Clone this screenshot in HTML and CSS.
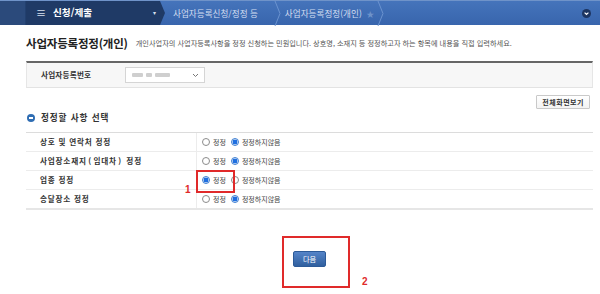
FILE: index.html
```html
<!DOCTYPE html>
<html lang="ko">
<head>
<meta charset="utf-8">
<title>사업자등록정정(개인)</title>
<link rel="stylesheet" href="styles.css">
</head>
<body>
<header class="gnb">
  <div class="gnb-home"></div>
  <div class="gnb-menu">
    <span class="burger">≡</span>
    <span class="menu-title">신청/제출</span>
    <span class="caret">▾</span>
  </div>
  <div class="crumb crumb-first">사업자등록신청/정정 등</div>
  <svg class="sep" width="8" height="25" viewBox="0 0 8 25"><polyline points="1,0 6,12.5 1,25" fill="none" stroke="#6b93cf" stroke-width="1"/></svg>
  <div class="crumb">사업자등록정정(개인) <span class="star">★</span></div>
  <svg class="sep" width="8" height="25" viewBox="0 0 8 25"><polyline points="1,0 6,12.5 1,25" fill="none" stroke="#6b93cf" stroke-width="1"/></svg>
  <div class="spacer"></div>
  <span class="gnb-toggle"><svg width="9" height="9" viewBox="0 0 9 9"><circle cx="4.5" cy="4.5" r="4.5" fill="#1d3561"/><polyline points="2.6,3.6 4.5,5.4 6.4,3.6" fill="none" stroke="#fff" stroke-width="1.2"/></svg></span>
</header>

<main class="content">
  <div class="title-row">
    <h1 class="page-title">사업자등록정정(개인)</h1>
    <p class="page-desc">개인사업자의 사업자등록사항을 정정 신청하는 민원입니다. 상호명, 소재지 등 정정하고자 하는 항목에 내용을 직접 입력하세요.</p>
  </div>

  <div class="reg-box">
    <span class="reg-label">사업자등록번호</span>
    <div class="select">
      <span class="blur-value"><i class="b1"></i><i class="b2"></i><i class="b3"></i></span>
      <svg class="select-arrow" width="7" height="5" viewBox="0 0 7 5"><polyline points="1,1 3.5,3.5 6,1" fill="none" stroke="#777" stroke-width="1"/></svg>
    </div>
  </div>

  <div class="tool-row">
    <button class="btn-plain" type="button">전체화면보기</button>
  </div>

  <h2 class="section-title"><span class="dot-icon"></span>정정할 사항 선택</h2>

  <div class="opt-table">
    <div class="opt-row">
      <div class="opt-label">상호 및 연락처 정정</div>
      <div class="opt-cell">
        <span class="radio"></span><span class="opt-text">정정</span>
        <span class="radio on"></span><span class="opt-text">정정하지않음</span>
      </div>
    </div>
    <div class="opt-row">
      <div class="opt-label">사업장소재지<span class="paren">(</span>임대차<span class="paren">)</span> 정정</div>
      <div class="opt-cell">
        <span class="radio"></span><span class="opt-text">정정</span>
        <span class="radio on"></span><span class="opt-text">정정하지않음</span>
      </div>
    </div>
    <div class="opt-row">
      <div class="opt-label">업종 정정</div>
      <div class="opt-cell marked">
        <span class="radio on"></span><span class="opt-text">정정</span>
        <span class="radio"></span><span class="opt-text">정정하지않음</span>
        <span class="mark mark-1">1</span>
      </div>
    </div>
    <div class="opt-row">
      <div class="opt-label">송달장소 정정</div>
      <div class="opt-cell">
        <span class="radio"></span><span class="opt-text">정정</span>
        <span class="radio on"></span><span class="opt-text">정정하지않음</span>
      </div>
    </div>
  </div>

  <div class="next-row">
    <div class="next-wrap">
      <button class="btn-next" type="button">다음</button>
      <span class="mark mark-2">2</span>
    </div>
  </div>
</main>
</body>
</html>
```

FILE: styles.css
```css
* { box-sizing: border-box; }

html, body {
  margin: 0;
  padding: 0;
  background: #fff;
}

body {
  width: 600px;
  height: 294px;
  overflow: hidden;
  font-family: "Noto Sans CJK KR", "Noto Sans", "Liberation Sans", sans-serif;
  color: #333;
}

/* ---------- top navigation bar ---------- */
.gnb {
  display: flex;
  align-items: center;
  height: 25px;
  background: linear-gradient(#4574bb, #3865ad);
  border-top: 1px solid #6f93c9;
}

.gnb-home {
  width: 26px;
  height: 100%;
  background: #2b4a7b;
  border-right: 1px solid #22406f;
}

.gnb-menu {
  display: flex;
  align-items: center;
  width: 139px;
  height: 100%;
  padding-left: 10px;
  background: #1f3a66;
  clip-path: polygon(0 0, calc(100% - 5px) 0, 100% 50%, calc(100% - 5px) 100%, 0 100%);
  color: #fff;
}

.burger {
  font-size: 10px;
  line-height: 1;
  color: #d8e0ee;
}

.menu-title {
  margin-left: 7px;
  font-size: 9.6px;
  font-weight: 700;
  line-height: 1;
  color: #fff;
}

.caret {
  margin-left: auto;
  margin-right: 9px;
  font-size: 6px;
  line-height: 1;
  color: #d8e0ee;
}

.crumb {
  font-size: 8.6px;
  line-height: 1;
  color: #d3def1;
  white-space: nowrap;
}

.crumb-first {
  margin-left: 8px;
  margin-right: 13px;
}

.sep {
  display: block;
  flex: none;
  margin-right: 3px;
}

.star {
  margin-left: 2px;
  font-size: 8px;
  color: #6e93ca;
}

.crumb + .sep { margin-left: 3px; }

.spacer { flex: 1; }

.gnb-toggle {
  display: flex;
  margin-right: 9px;
}

/* ---------- content ---------- */
.content {
  padding: 0 7px 0 26px;
}

.title-row {
  display: flex;
  align-items: center;
  height: 15px;
  margin-top: 11px;
}

.page-title {
  margin: 0;
  font-size: 11.5px;
  font-weight: 700;
  line-height: 15px;
  color: #222;
  letter-spacing: -0.2px;
  white-space: nowrap;
}

.page-desc {
  margin: 0 0 0 8px;
  font-size: 7.2px;
  line-height: 15px;
  color: #555;
  white-space: nowrap;
}

.reg-box {
  display: flex;
  align-items: center;
  height: 27px;
  margin-top: 10px;
  padding-left: 14px;
  background: #f7f7f7;
  border-top: 2px solid #666;
  border-left: 1px solid #e6e6e6;
  border-right: 1px solid #e6e6e6;
  border-bottom: 1px solid #e3e3e3;
}

.reg-label {
  width: 84px;
  font-size: 7.6px;
  font-weight: 700;
  letter-spacing: 0.2px;
  color: #333;
  line-height: 1;
}

.select {
  display: flex;
  align-items: center;
  width: 80px;
  height: 16px;
  padding: 0 5px 0 6px;
  background: #fff;
  border: 1px solid #d5d5d5;
}

.blur-value {
  display: flex;
  gap: 3px;
}

.blur-value i {
  display: block;
  height: 4px;
  background: #cfcfcf;
  border-radius: 1px;
  filter: blur(0.6px);
}

.blur-value .b1 { width: 11px; }
.blur-value .b2 { width: 6px; }
.blur-value .b3 { width: 15px; }

.select-arrow {
  margin-left: auto;
}

.tool-row {
  display: flex;
  justify-content: flex-end;
  margin-top: 7px;
  padding-right: 3px;
}

.btn-plain {
  height: 14px;
  padding: 0 5px;
  font-family: inherit;
  font-size: 7px;
  font-weight: 700;
  line-height: 12px;
  letter-spacing: 0.5px;
  color: #333;
  background: linear-gradient(#fff, #f3f3f3);
  border: 1px solid #c9c9c9;
  border-radius: 1px;
}

.section-title {
  display: flex;
  align-items: center;
  margin: 3px 0 0 1px;
  height: 11px;
  font-size: 8.6px;
  font-weight: 700;
  line-height: 11px;
  letter-spacing: 0.9px;
  color: #333;
}

.dot-icon {
  position: relative;
  width: 8px;
  height: 8px;
  margin-right: 6px;
  border-radius: 50%;
  background: #2f6db3;
}

.dot-icon::after {
  content: "";
  position: absolute;
  left: 2px;
  top: 3px;
  width: 4px;
  height: 2px;
  background: #fff;
}

/* ---------- option table ---------- */
.opt-table {
  margin-top: 9px;
  border-top: 1px solid #dcdcdc;
  border-bottom: 2px solid #e6e6e6;
}

.opt-row {
  display: flex;
  height: 19px;
  border-bottom: 1px solid #ececec;
}

.opt-row:last-child { border-bottom: 0; height: 18px; }

.opt-label {
  display: flex;
  align-items: center;
  width: 171px;
  padding-left: 14px;
  border-right: 1px solid #ececec;
  font-size: 7.6px;
  font-weight: 700;
  letter-spacing: 0.8px;
  line-height: 1;
  color: #333;
  white-space: pre;
}

.paren {
  padding: 0 1.5px;
}

.opt-cell {
  position: relative;
  display: flex;
  align-items: center;
  padding-left: 5px;
}

.radio {
  width: 8px;
  height: 8px;
  border-radius: 50%;
  border: 1px solid #8b8b8b;
  background: #fff;
}

.radio.on {
  border-color: #3f7fd2;
  background: radial-gradient(circle, #1f6fe0 0 2.2px, #cfe0f6 2.6px);
}

.opt-text {
  margin: 0 5px 0 3px;
  font-size: 7px;
  line-height: 1;
  color: #444;
  white-space: nowrap;
}

/* annotation marks */
.marked::before {
  content: "";
  position: absolute;
  left: -1px;
  top: -1px;
  width: 35px;
  height: 19px;
  border: 2px solid #e02a2a;
}

.mark {
  position: absolute;
  font-family: "Liberation Sans", sans-serif;
  font-size: 10px;
  font-weight: 700;
  line-height: 1;
  color: #e02a2a;
}

.mark-1 {
  left: -12px;
  top: 14px;
}

/* ---------- next button ---------- */
.next-row {
  display: flex;
  justify-content: center;
  margin-top: 41px;
}

.next-wrap {
  position: relative;
  display: flex;
}

.next-wrap::before {
  content: "";
  position: absolute;
  left: -11px;
  top: -15px;
  width: 64px;
  height: 48px;
  border: 2px solid #e02a2a;
}

.btn-next {
  width: 33px;
  height: 16px;
  padding: 0;
  font-family: inherit;
  font-size: 7.2px;
  line-height: 14px;
  color: #fff;
  background: linear-gradient(#5584c8, #30609f);
  border: 1px solid #2c5a98;
  border-radius: 2px;
}

.mark-2 {
  left: 69px;
  top: 26px;
}
```
